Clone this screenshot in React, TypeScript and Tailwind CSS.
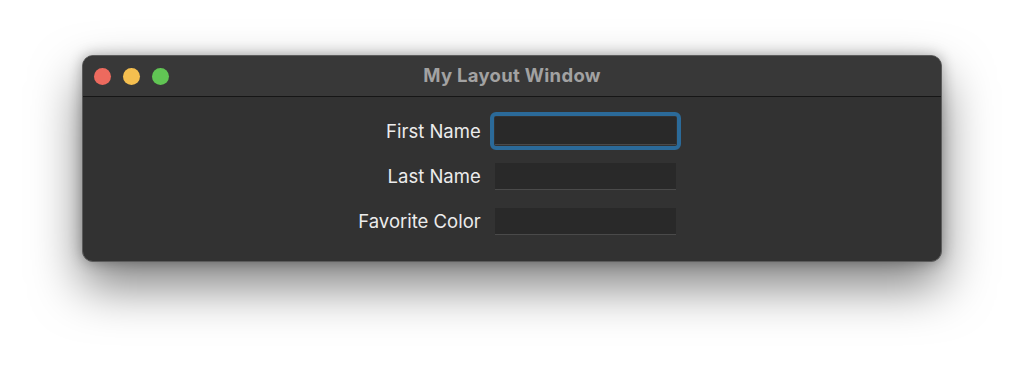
import { Fragment } from "react";

export default function App() {
  const rows = ["First Name", "Last Name", "Favorite Color"];
  return (
    <div className="w-[1024px] h-[370px] bg-white pt-[55px] pl-[82px]" style={{ fontFamily: "Inter, 'Liberation Sans', sans-serif" }}>
      <div className="w-[860px] h-[207px] rounded-[11px] bg-[#323232] border border-[#5c5c5c] shadow-[0_24px_50px_rgba(0,0,0,0.5),0_0_14px_rgba(0,0,0,0.3)] overflow-hidden flex flex-col">
        <div className="h-[41px] bg-[#383838] border-b border-[#161616] flex items-center relative">
          <div className="flex gap-[12px] pl-[11px]">
            <span className="w-[17px] h-[17px] rounded-full bg-[#ed6a5e]" />
            <span className="w-[17px] h-[17px] rounded-full bg-[#f5bf4f]" />
            <span className="w-[17px] h-[17px] rounded-full bg-[#61c554]" />
          </div>
          <div className="absolute inset-0 flex items-center justify-center text-[18.5px] font-bold text-[#a2a2a2] tracking-[0.3px]">My Layout Window</div>
        </div>
        <div className="flex justify-center pt-[20px] pl-[10px]">
          <div className="grid grid-cols-[auto_auto] gap-x-[14px] gap-y-[18px] items-center">
            {rows.map((r, i) => (
              <Fragment key={r}>
                <div className="text-right text-[18.5px] text-[#ececec] leading-none">{r}</div>
                <div className={i === 0 ? "rounded-[6px] border-[4px] border-[#2b6a99] p-[1px] -m-[5px]" : ""}>
                  <div className={"w-[181px] bg-[#292929] border-b border-[#4a4a4a] " + (i === 0 ? "h-[28px]" : "h-[27px]")} />
                </div>
              </Fragment>
            ))}
          </div>
        </div>
      </div>
    </div>
  );
}
